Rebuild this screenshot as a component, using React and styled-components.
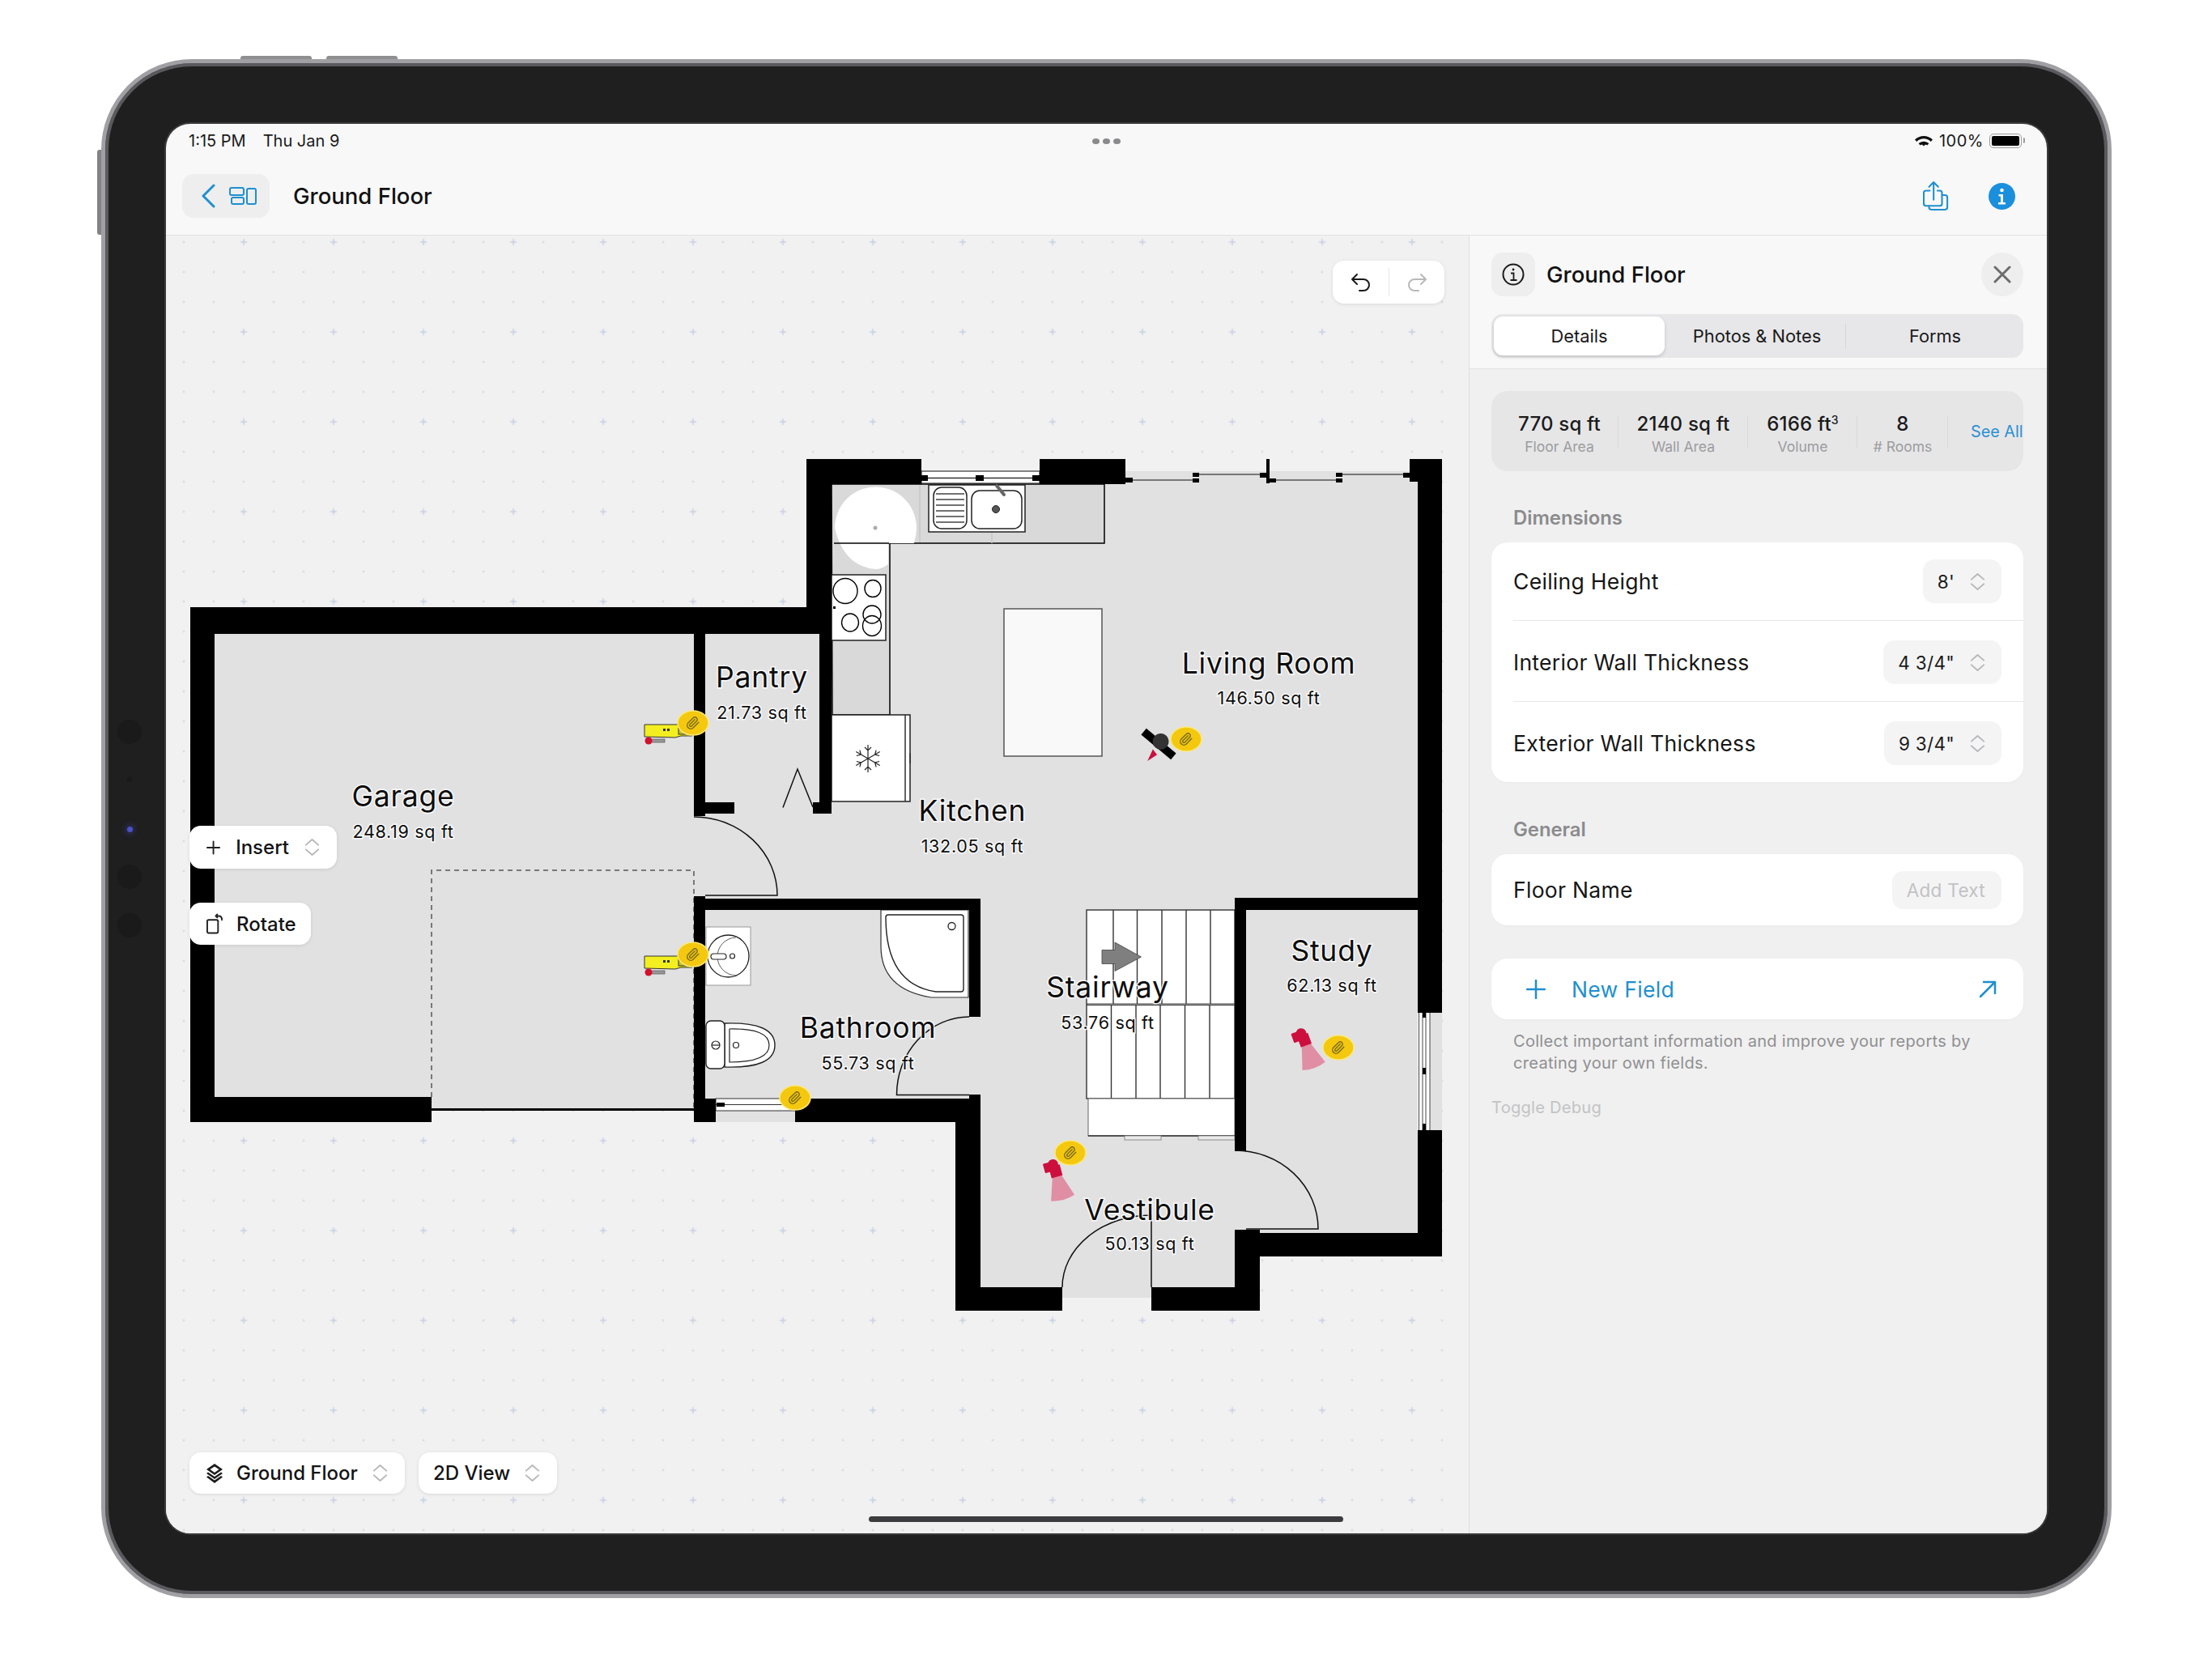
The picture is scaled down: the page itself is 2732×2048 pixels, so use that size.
import React from "react";
import styled, { createGlobalStyle } from "styled-components";

const GlobalStyle = createGlobalStyle`
  html, body { margin: 0; padding: 0; background: #fff; }
  * { box-sizing: border-box; }
  body { font-family: Inter, "Liberation Sans", sans-serif; color: #111; }
`;

const Page = styled.div`
  width: 2732px;
  height: 2048px;
  padding: 73px 0 0 125px;
  overflow: hidden;
`;

const Device = styled.div`
  position: relative;
  width: 2483px;
  height: 1901px;
  padding: 75px;
  border: 5px solid #a0a0a4;
  border-radius: 112px;
  background: #1f1f20;
  box-shadow: inset 0 0 0 4px #5a5a5e;
`;

const TopButton = styled.div`
  position: absolute;
  top: -9px;
  left: ${(p) => p.$left}px;
  width: 88px;
  height: 4px;
  border-radius: 3px 3px 0 0;
  background: #8f8f92;
`;

const SideButton = styled.div`
  position: absolute;
  top: 107px;
  left: -10px;
  width: 5px;
  height: 105px;
  border-radius: 3px 0 0 3px;
  background: #838386;
`;

const Sensor = styled.div`
  position: absolute;
  left: ${(p) => p.$left}px;
  top: ${(p) => p.$top}px;
  width: ${(p) => p.$size}px;
  height: ${(p) => p.$size}px;
  border-radius: 50%;
  background: ${(p) => p.$color};
  box-shadow: ${(p) => (p.$glow ? "0 0 6px 3px rgba(70, 70, 170, 0.35)" : "none")};
`;

const Screen = styled.div`
  position: relative;
  display: flex;
  flex-direction: column;
  width: 2323px;
  height: 1741px;
  border-radius: 30px;
  overflow: hidden;
  background: #f8f8f8;
  box-shadow: 0 0 0 2px #3a3a3c;
`;

const StatusBar = styled.div`
  position: relative;
  display: flex;
  align-items: center;
  justify-content: space-between;
  height: 42px;
  padding: 0 31px 0 28px;
  font-size: 20px;
  color: #1a1a1a;
`;

const StatusGroup = styled.div`
  display: flex;
  align-items: center;
  gap: ${(p) => p.$gap}px;
`;

const BatteryText = styled.span`
  letter-spacing: 0.5px;
`;

const TopDots = styled.div`
  position: absolute;
  left: 1144px;
  top: 18px;
  display: flex;
  gap: 4px;
  span {
    width: 9px;
    height: 7px;
    border-radius: 50%;
    background: #8a8a8c;
  }
`;

const Battery = styled.div`
  position: relative;
  width: 40px;
  height: 18px;
  padding: 2px;
  border: 1.5px solid #9a9a9c;
  border-radius: 5px;
  &::before {
    content: "";
    display: block;
    width: 100%;
    height: 100%;
    border-radius: 2px;
    background: #000;
  }
  &::after {
    content: "";
    position: absolute;
    right: -5px;
    top: 4px;
    width: 2px;
    height: 7px;
    border-radius: 0 2px 2px 0;
    background: #9a9a9c;
  }
`;

const NavBar = styled.div`
  display: flex;
  align-items: center;
  height: 96px;
  padding: 0 39px 1px 20px;
  border-bottom: 1px solid #e2e2e4;
`;

const BackButton = styled.div`
  display: flex;
  align-items: center;
  gap: 16px;
  width: 108px;
  height: 54px;
  padding-left: 24px;
  border-radius: 14px;
  background: #eeeeef;
`;

const NavTitle = styled.div`
  margin-left: 29px;
  font-size: 27.5px;
  font-weight: 500;
`;

const NavIcons = styled.div`
  display: flex;
  align-items: center;
  gap: 49px;
  margin-left: auto;
`;

const Main = styled.div`
  display: flex;
  flex: 1;
  min-height: 0;
`;

const Canvas = styled.div`
  position: relative;
  flex: 1;
  background: #f1f1f2;
`;

const PlanSvg = styled.svg`
  position: absolute;
  inset: 0;
  width: 100%;
  height: 100%;
`;

const RoomName = styled.text`
  font-family: Inter, sans-serif;
  font-size: 35.5px;
  letter-spacing: 0.8px;
  text-anchor: middle;
  fill: #0d0d0d;
  stroke: #fff;
  stroke-width: 3px;
  stroke-opacity: 0.85;
  paint-order: stroke;
`;

const RoomArea = styled(RoomName)`
  font-size: 21.5px;
  letter-spacing: 0.7px;
`;

const FloatButton = styled.div`
  position: absolute;
  left: ${(p) => p.$left}px;
  top: ${(p) => p.$top}px;
  display: flex;
  align-items: center;
  gap: ${(p) => p.$gap}px;
  width: ${(p) => p.$width}px;
  height: ${(p) => p.$height}px;
  padding-left: ${(p) => p.$pad}px;
  border-radius: 14px;
  background: #fff;
  box-shadow: 0 1px 4px rgba(0, 0, 0, 0.1);
  font-size: 24px;
  font-weight: 500;
  white-space: nowrap;
  color: #141414;
`;

const PushRight = styled.span`
  display: flex;
  margin-left: auto;
  margin-right: 21px;
`;

const UndoBox = styled.div`
  position: absolute;
  left: 1441px;
  top: 31px;
  display: grid;
  grid-template-columns: 1fr 1fr;
  width: 138px;
  height: 53px;
  border-radius: 14px;
  background: #fff;
  box-shadow: 0 1px 4px rgba(0, 0, 0, 0.1);
`;

const UndoCell = styled.div`
  display: flex;
  align-items: center;
  justify-content: center;
  position: relative;
  & + &::before {
    content: "";
    position: absolute;
    left: 0;
    top: 9px;
    bottom: 9px;
    width: 1px;
    background: #e6e6e8;
  }
`;

const HomeBar = styled.div`
  position: absolute;
  left: 868px;
  bottom: 14px;
  width: 586px;
  height: 7px;
  border-radius: 4px;
  background: #3c3c3e;
`;

const Panel = styled.div`
  display: flex;
  flex-direction: column;
  width: 714px;
  border-left: 1px solid #dedee0;
  background: #f0f0f0;
`;

const PanelHead = styled.div`
  display: flex;
  flex-direction: column;
  gap: 22px;
  padding: 21px 29px 13px 27px;
  border-bottom: 1px solid #e2e2e4;
  background: #f8f8f8;
`;

const HeadRow = styled.div`
  display: flex;
  align-items: center;
  height: 54px;
`;

const HeadIcon = styled.div`
  display: flex;
  align-items: center;
  justify-content: center;
  width: 54px;
  height: 54px;
  border-radius: 14px;
  background: #eeeeef;
`;

const HeadTitle = styled.div`
  margin-left: 14px;
  font-size: 27.5px;
  font-weight: 500;
`;

const CloseButton = styled.div`
  display: flex;
  align-items: center;
  justify-content: center;
  width: 52px;
  height: 54px;
  margin-left: auto;
  border-radius: 50%;
  background: #eeeeef;
`;

const Tabs = styled.div`
  position: relative;
  display: grid;
  grid-template-columns: 215px 220px 220px;
  align-items: center;
  height: 54px;
  padding: 3px;
  border-radius: 14px;
  background: #e7e7e9;
`;

const Tab = styled.div`
  position: relative;
  display: flex;
  align-items: center;
  justify-content: center;
  height: 48px;
  width: ${(p) => (p.$active ? "211px" : "auto")};
  border-radius: 11px;
  font-size: 21.8px;
  color: #1a1a1a;
  background: ${(p) => (p.$active ? "#fff" : "transparent")};
  box-shadow: ${(p) => (p.$active ? "0 2px 4px rgba(0,0,0,.16)" : "none")};
  &::after {
    content: "";
    display: ${(p) => (p.$divider ? "block" : "none")};
    position: absolute;
    right: 0;
    top: 9px;
    bottom: 8px;
    width: 1px;
    background: #d5d5d8;
  }
`;

const PanelBody = styled.div`
  flex: 1;
  padding: 27px 29px 0 27px;
`;

const StatBox = styled.div`
  display: grid;
  grid-template-columns: 146px 160px 135px 112px 1fr;
  align-items: center;
  height: 99px;
  padding-left: 11px;
  border-radius: 20px;
  overflow: hidden;
  background: #e6e6e7;
`;

const Stat = styled.div`
  position: relative;
  display: flex;
  flex-direction: column;
  align-items: center;
  padding-top: 8px;
  &::after {
    content: "";
    position: absolute;
    right: 0;
    top: 12px;
    height: 41px;
    width: 1px;
    background: #dadadc;
  }
`;

const StatValue = styled.div`
  font-size: 24px;
  font-weight: 500;
  line-height: 30px;
  letter-spacing: 0.2px;
  white-space: nowrap;
  color: #1b1b1b;
  sup {
    font-size: 14px;
    line-height: 0;
    vertical-align: 8px;
  }
`;

const StatLabel = styled.div`
  margin-top: 1px;
  font-size: 17.5px;
  line-height: 24px;
  color: #9c9c9e;
`;

const SeeAll = styled.div`
  padding-left: 28px;
  white-space: nowrap;
  font-size: 19.8px;
  color: #2a90d2;
`;

const SectionLabel = styled.div`
  height: 30px;
  margin: ${(p) => p.$top}px 0 15px;
  padding-left: 27px;
  font-size: 23.8px;
  font-weight: 600;
  line-height: 30px;
  color: #8b8b8d;
`;

const Card = styled.div`
  border-radius: 20px;
  background: #fff;
  box-shadow: 0 1px 3px rgba(0, 0, 0, 0.03);
`;

const Row = styled.div`
  display: flex;
  align-items: center;
  justify-content: space-between;
  height: ${(p) => p.$height}px;
  margin-left: 27px;
  padding-right: 27px;
  font-size: 26.5px;
  letter-spacing: 0.3px;
  color: #161616;
  & + & {
    padding-top: 3px;
    border-top: 1px solid #e8e8ea;
  }
`;

const Pill = styled.div`
  display: flex;
  align-items: center;
  height: ${(p) => p.$height || 54}px;
  padding: 0 20px 0 18px;
  border-radius: 14px;
  font-size: 22.5px;
  letter-spacing: 0.3px;
  background: #f4f4f5;
  color: ${(p) => p.$color || "#1a1a1a"};
  svg {
    margin-left: 19px;
  }
`;

const NewFieldCard = styled(Card)`
  display: flex;
  align-items: center;
  height: 75px;
  margin-top: 41px;
  padding: 0 33px 0 43px;
  font-size: 26.5px;
  letter-spacing: 0.3px;
  color: #1f8fce;
`;

const NewFieldText = styled.span`
  margin-left: 32px;
  margin-right: auto;
`;

const Note = styled.div`
  margin-top: 14px;
  padding-left: 27px;
  font-size: 20px;
  line-height: 27px;
  letter-spacing: 0.3px;
  color: #8f8f91;
`;

const ToggleDebug = styled.div`
  margin-top: 27px;
  font-size: 20.2px;
  line-height: 27px;
  letter-spacing: 0.2px;
  color: #c3c3c5;
`;

const Updown = () => (
  <svg width="19" height="21" viewBox="1 1 18 22" fill="none" stroke="#b8b8bb" strokeWidth="2" strokeLinecap="round" strokeLinejoin="round">
    <path d="M2 9 10 2l8 7M2 15l8 7 8-7" />
  </svg>
);

const Clip = ({ x, y }) => (
  <g transform={`translate(${x} ${y})`}>
    <ellipse rx="19" ry="15" fill="#f3c80f" stroke="#fbe97a" strokeWidth="1.5" />
    <path
      d="m21.44 11.05-9.19 9.19a6 6 0 0 1-8.49-8.49l8.57-8.57A4 4 0 1 1 18 8.84l-8.59 8.57a2 2 0 0 1-2.83-2.83l8.49-8.48"
      fill="none"
      stroke="#7a6a1a"
      strokeWidth="2"
      strokeLinecap="round"
      strokeLinejoin="round"
      transform="scale(0.72) translate(-12 -12)"
    />
  </g>
);

const Torch = ({ y }) => (
  <g transform={`translate(0 ${y})`}>
    <path d="M796 895h44l6-3h9v17h-14l-7 2-38-1z" fill="#f2ee20" stroke="#333" strokeWidth="1" />
    <rect x="819" y="900" width="3" height="3" fill="#333" />
    <rect x="824" y="900" width="3" height="3" fill="#333" />
    <rect x="838" y="899" width="10" height="8" fill="#c9c326" stroke="#333" strokeWidth="1" />
    <rect x="803" y="913" width="18" height="4" fill="#999" stroke="#555" strokeWidth="0.7" />
    <circle cx="801" cy="915" r="4.5" fill="#d3102d" />
  </g>
);

const Camera = ({ x, y, angle }) => (
  <g transform={`translate(${x} ${y}) rotate(${angle})`}>
    <path d="M-6 10h12l9 27q-15 5-30 0z" fill="#e08ea3" />
    <rect x="-7" y="-4" width="14" height="14" fill="#cc0f3c" />
    <circle cx="-1" cy="-6" r="6.500" fill="#cc0f3c" />
    <rect x="-13" y="-10" width="7" height="12" rx="1" fill="#cc0f3c" />
  </g>
);

const walls = [
  [235, 750, 30, 636],
  [235, 750, 777, 33],
  [871, 750, 156, 29],
  [235, 1355, 298, 31],
  [857, 783, 14, 225],
  [871, 991, 36, 14],
  [1012, 779, 15, 226],
  [1004, 991, 23, 14],
  [996, 567, 31, 183],
  [996, 567, 142, 31],
  [1284, 567, 106, 31],
  [1741, 567, 40, 28],
  [1751, 567, 30, 684],
  [1751, 1396, 30, 156],
  [1525, 1523, 256, 29],
  [1525, 1109, 14, 313],
  [1525, 1109, 240, 15],
  [1525, 1519, 31, 100],
  [1422, 1590, 134, 29],
  [1180, 1590, 132, 29],
  [1180, 1386, 31, 233],
  [982, 1357, 229, 29],
  [1197, 1110, 14, 146],
  [1197, 1352, 14, 10],
  [857, 1110, 354, 14],
  [857, 1107, 14, 279],
  [857, 1357, 27, 29],
];

const rooms = [
  ["Living Room", "146.50 sq ft", 1567, 832, 870],
  ["Kitchen", "132.05 sq ft", 1201, 1014, 1053],
  ["Garage", "248.19 sq ft", 498, 996, 1035],
  ["Pantry", "21.73 sq ft", 941, 849, 888],
  ["Bathroom", "55.73 sq ft", 1072, 1282, 1321],
  ["Stairway", "53.76 sq ft", 1368, 1232, 1271],
  ["Study", "62.13 sq ft", 1645, 1187, 1225],
  ["Vestibule", "50.13 sq ft", 1420, 1507, 1544],
];

const stepsTop = [1375, 1404.5, 1435, 1465, 1495];
const stepsLow = [1372.5, 1403, 1433, 1463.5, 1494];

const FloorPlan = () => (
  <PlanSvg viewBox="205 291 1609 1603" preserveAspectRatio="none">
    <defs>
      <pattern id="grid" x="282.5" y="280.5" width="111" height="111" patternUnits="userSpaceOnUse">
        {[18.5, 55.5, 92.5].map((py) =>
          [18.5, 55.5, 92.5].map((px) =>
            px === 18.5 && py === 18.5 ? null : (
              <rect key={`${px}-${py}`} x={px - 1} y={py - 1} width="2" height="2" fill="#cdd0da" />
            )
          )
        )}
        <path d="M18.5 14.500v8M14.500 18.5h8" stroke="#c5cce0" strokeWidth="1.4" />
      </pattern>
    </defs>
    <rect x="205" y="291" width="1609" height="1603" fill="url(#grid)" />

    {/* floor */}
    <path
      d="M235 750H996V567H1390V582H1741V567H1781V1552H1556V1619H1422V1603H1312V1619H1180V1386H857V1370H533V1386H235Z"
      fill="#e1e1e2"
    />
    <rect x="1138" y="567" width="146" height="15" fill="#f1f1f2" />

    {/* kitchen counter */}
    <path d="M1027 598H1364V671H1099V883H1028Z" fill="#d9d9da" stroke="#000" strokeWidth="1.5" />
    <path d="M1136 600v70M1225 657v14" stroke="#c8c8c9" strokeWidth="1.5" />
    <path d="M1031 652a50 50 0 0 1 101 0q0 9-3 19h-32v26q-8 6-16 6-34-3-47-40z" fill="#fff" />
    <circle cx="1081" cy="652" r="2.5" fill="#aaa" />
    <path d="M1030 671H1098" stroke="#000" strokeWidth="1.5" />

    <rect x="1147" y="599" width="119" height="58" fill="#fff" stroke="#222" strokeWidth="1.5" />
    <rect x="1153" y="602" width="41" height="51" rx="10" fill="#fff" stroke="#222" strokeWidth="1.5" />
    <path d="M1156 610h35M1156 617h35M1156 624h35M1156 631h35M1156 638h35M1156 645h35" stroke="#444" strokeWidth="1.5" />
    <rect x="1200" y="606" width="62" height="47" rx="10" fill="#fff" stroke="#222" strokeWidth="1.5" />
    <circle cx="1230" cy="629" r="4.5" fill="#555" stroke="#222" />
    <path d="M1231 600l9 11" stroke="#666" strokeWidth="4" strokeLinecap="round" />

    <rect x="1027" y="710" width="67" height="81" fill="#fff" stroke="#222" strokeWidth="1.5" />
    <ellipse cx="1044" cy="730" rx="15" ry="15.5" fill="none" stroke="#000" strokeWidth="1.4" />
    <ellipse cx="1078" cy="727" rx="10" ry="10.5" fill="none" stroke="#000" strokeWidth="1.4" />
    <ellipse cx="1050" cy="769" rx="10.5" ry="11" fill="none" stroke="#000" strokeWidth="1.4" />
    <ellipse cx="1077" cy="759" rx="11" ry="11" fill="none" stroke="#000" strokeWidth="1.4" />
    <ellipse cx="1077" cy="773" rx="11.5" ry="12.5" fill="none" stroke="#000" strokeWidth="1.4" />
    <rect x="1029" y="749" width="3" height="3" fill="#000" />

    <rect x="1027" y="883" width="97" height="107" fill="#fff" stroke="#222" strokeWidth="1.5" />
    <path d="M1118 883v107M1124 930v13" stroke="#333" strokeWidth="1.5" />
    <g stroke="#222" strokeWidth="1.2" fill="none" transform="translate(1072 937)">
      {[0, 60, 120, 180, 240, 300].map((a) => (
        <path key={a} d="M0 0V-17M-4-14 0-10l4-4" transform={`rotate(${a})`} />
      ))}
    </g>

    {/* island */}
    <rect x="1240" y="752" width="121" height="182" fill="#f9f9f9" stroke="#555" strokeWidth="1.5" />

    {/* bathroom */}
    <path d="M1088 1124H1196V1232H1150Q1088 1222 1088 1169Z" fill="#fff" stroke="#333" strokeWidth="1.2" />
    <path d="M1097 1130H1187a3 3 0 0 1 3 3V1222a3 3 0 0 1-3 3H1156Q1094 1216 1094 1133a3 3 0 0 1 3-3Z" fill="#fff" stroke="#222" strokeWidth="1.4" />
    <circle cx="1175.5" cy="1144" r="4.5" fill="#fff" stroke="#222" strokeWidth="1.3" />
    <rect x="872" y="1145" width="55" height="72" fill="#fff" stroke="#999" strokeWidth="1" />
    <ellipse cx="899.5" cy="1181" rx="25.5" ry="26" fill="#fff" stroke="#222" strokeWidth="1.3" />
    <path d="M889 1157a23 23 0 0 1 1 47" fill="none" stroke="#333" strokeWidth="0.8" transform="rotate(180 899.5 1181)" />
    <rect x="878" y="1178" width="19" height="7" rx="3.5" fill="#fff" stroke="#222" strokeWidth="1.2" />
    <circle cx="904.5" cy="1181" r="3" fill="#fff" stroke="#222" strokeWidth="1.2" />
    <path d="M895 1264Q957 1262 957 1291T895 1318Z" fill="#fff" stroke="#222" strokeWidth="1.4" />
    <path d="M901 1271Q950 1270 950 1291T901 1312Z" fill="#fff" stroke="#222" strokeWidth="1.2" />
    <circle cx="909" cy="1291" r="3.5" fill="#fff" stroke="#222" strokeWidth="1.2" />
    <rect x="872" y="1261" width="23" height="59" rx="6" fill="#fff" stroke="#222" strokeWidth="1.4" />
    <circle cx="884" cy="1291" r="5" fill="#fff" stroke="#222" strokeWidth="1.2" />
    <path d="M879 1291h10" stroke="#222" strokeWidth="1.2" />

    {/* stairs */}
    <rect x="1342" y="1124" width="183" height="233" fill="#fff" stroke="#333" strokeWidth="1.4" />
    <path d="M1342 1240h183M1342 1241.5h183" stroke="#333" strokeWidth="1" />
    {stepsTop.map((x) => (
      <path key={x} d={`M${x} 1124v116`} stroke="#333" strokeWidth="1.4" />
    ))}
    {stepsLow.map((x) => (
      <path key={x} d={`M${x} 1242v115`} stroke="#333" strokeWidth="1.4" />
    ))}
    <rect x="1344" y="1357" width="181" height="46" fill="#fff" stroke="#666" strokeWidth="1" />
    <path d="M1344 1403h181" stroke="#333" strokeWidth="1.5" />
    <rect x="1389" y="1403" width="45" height="5" fill="#e9e9ea" stroke="#777" strokeWidth="0.8" />
    <rect x="1480" y="1403" width="45" height="5" fill="#e9e9ea" stroke="#777" strokeWidth="0.8" />
    <path d="M1361 1173.5h16V1164l32.500 18-32.500 17.500v-9h-16z" fill="#7f7f7f" stroke="#444" strokeWidth="0.8" />

    {/* windows */}
    <rect x="1138" y="582" width="146" height="15" fill="#fff" stroke="#333" strokeWidth="1.2" />
    <path d="M1138 590.500h146" stroke="#333" strokeWidth="1.5" />
    <path d="M1138 587h8v7h-8zM1205 587h10v7h-10zM1275 587h9v7h-9z" fill="#000" />
    <path d="M1390 593H1475M1481 586H1556M1576 593H1650M1658 586H1733" stroke="#555" strokeWidth="1.4" />
    <path d="M1390 590h9v6h-9zM1473 584h8v5h-8zM1473 591h8v5h-8zM1556 584h8v6h-8zM1564 567h4v30h-4zM1568 591h8v5h-8zM1650 584h8v5h-8zM1650 591h8v5h-8zM1733 584h8v6h-8z" fill="#000" />
    <rect x="1751" y="1251" width="15" height="145" fill="#fff" />
    <path d="M1752.500 1251v145M1757 1251v145M1761 1251v145M1766 1251v145" stroke="#444" strokeWidth="1" />
    <path d="M1757 1319h4v8h-4zM1757 1388h4v8h-4zM1757 1251h4v6h-4z" fill="#000" />
    <rect x="884" y="1357" width="98" height="15" fill="#fff" stroke="#333" strokeWidth="1" />
    <path d="M884 1364.500h98" stroke="#333" strokeWidth="1.2" />
    <path d="M885 1362h10v5h-10z" fill="#000" />

    {/* garage door */}
    <path d="M533 1370.500H857" stroke="#000" strokeWidth="3" />
    <path d="M533 1355V1075H857V1370" fill="none" stroke="#555" strokeWidth="1.5" strokeDasharray="6 5" />

    {walls.map(([x, y, w, h]) => (
      <rect key={`${x}-${y}-${w}`} x={x} y={y} width={w} height={h} fill="#000" />
    ))}

    {/* doors */}
    <g fill="none" stroke="#111" strokeWidth="1.5">
      <path d="M857 1009A103 97 0 0 1 960 1106H871" />
      <path d="M967 997.500 985 950l19 47" />
      <path d="M1197 1256A90 96 0 0 0 1107.500 1352.500H1197" />
      <path d="M1312 1590A110 89 0 0 1 1422 1501V1590" />
      <path d="M1525 1421A103 97 0 0 1 1628 1518H1539" />
    </g>

    {/* capture markers */}
    <Torch y={0} />
    <Torch y={286} />
    <Camera x={1303} y={1444} angle={-15} />
    <Camera x={1610} y={1282} angle={-20} />
    <g transform="translate(1431 919) rotate(40)">
      <rect x="-24" y="-5" width="48" height="10" fill="#000" />
      <circle cy="-4" r="10" fill="#333" />
    </g>
    <path d="M1424 927l-5 11 9-6z" fill="#cc0f3c" stroke="#cc0f3c" strokeWidth="1.5" />
    <Clip x={856} y={893} />
    <Clip x={856} y={1179} />
    <Clip x={982} y={1356} />
    <Clip x={1465} y={913} />
    <Clip x={1322} y={1424} />
    <Clip x={1653} y={1294} />

    {rooms.map(([name, area, x, y1, y2]) => (
      <g key={name}>
        <RoomName x={x} y={y1}>{name}</RoomName>
        <RoomArea x={x} y={y2}>{area}</RoomArea>
      </g>
    ))}
  </PlanSvg>
);

export default function App() {
  return (
    <Page>
      <GlobalStyle />
      <Device>
        <TopButton $left={167} />
        <TopButton $left={273} />
        <SideButton />
        <Sensor $left={15} $top={811} $size={30} $color="#1a1a1b" />
        <Sensor $left={27} $top={882} $size={6} $color="#19191a" />
        <Sensor $left={27} $top={943} $size={7} $color="#4a50c8" $glow />
        <Sensor $left={15} $top={990} $size={30} $color="#1a1a1b" />
        <Sensor $left={15} $top={1050} $size={30} $color="#1a1a1b" />
        <Screen>
          <StatusBar>
            <StatusGroup $gap={21}>
              <span>1:15 PM</span>
              <span>Thu Jan 9</span>
            </StatusGroup>
            <TopDots>
              <span />
              <span />
              <span />
            </TopDots>
            <StatusGroup $gap={7}>
              <svg width="24" height="18" viewBox="0 0 24 18" fill="#111">
                <path d="M12 14.500l3 -3.100q-3-2.400-6 0zM12 2C7.800 2 4 3.600 1 6.500l2.300 2.400C5.600 6.600 8.700 5.300 12 5.300s6.400 1.300 8.700 3.600L23 6.500C20 3.600 16.200 2 12 2zM5.600 11.200l2.200 2.200c2.300-2.200 6.100-2.200 8.400 0l2.200-2.200c-3.500-3.400-9.300-3.400-12.800 0z" transform="translate(0 1)" />
              </svg>
              <BatteryText>100%</BatteryText>
              <Battery />
            </StatusGroup>
          </StatusBar>
          <NavBar>
            <BackButton>
              <svg width="18" height="30" viewBox="0 0 18 30" fill="none" stroke="#1f8fce" strokeWidth="3" strokeLinecap="round" strokeLinejoin="round">
                <path d="M15 2 2 15l13 13" />
              </svg>
              <svg width="34" height="22" viewBox="0 0 34 22" fill="none" stroke="#1f8fce" strokeWidth="2">
                <rect x="1" y="1" width="17" height="9" rx="2" />
                <rect x="3" y="13" width="15" height="8" rx="2" />
                <rect x="22" y="2" width="11" height="19" rx="2" />
              </svg>
            </BackButton>
            <NavTitle>Ground Floor</NavTitle>
            <NavIcons>
              <svg width="32" height="40" viewBox="0 0 34 40" fill="none" stroke="#1f8fce" strokeWidth="2.200" strokeLinecap="round" strokeLinejoin="round">
                <path d="M14 25V2M8 8l6-6 6 6" />
                <path d="M9 13H4a3 3 0 0 0-3 3v14a3 3 0 0 0 3 3h18a3 3 0 0 0 3-3V16a3 3 0 0 0-3-3h-3" />
                <path d="M25 19h4a3 3 0 0 1 3 3v13a3 3 0 0 1-3 3H11a3 3 0 0 1-3-3v-2" />
              </svg>
              <svg width="33" height="33" viewBox="0 0 33 33">
                <circle cx="16.500" cy="16.500" r="16.500" fill="#1a8fdd" />
                <circle cx="16.500" cy="9" r="2.300" fill="#fff" />
                <path d="M12.500 14h5.500v10h3v2.500h-9V24h3v-7.500h-2.500z" fill="#fff" />
              </svg>
            </NavIcons>
          </NavBar>
          <Main>
            <Canvas>
              <FloorPlan />
              <UndoBox>
                <UndoCell>
                  <svg width="28" height="26" viewBox="0 0 28 26" fill="none" stroke="#1a1a1a" strokeWidth="2" strokeLinecap="round" strokeLinejoin="round">
                    <path d="M9 3 3 9l6 6M3 9h14a7 7 0 0 1 0 14h-5" />
                  </svg>
                </UndoCell>
                <UndoCell>
                  <svg width="28" height="26" viewBox="0 0 28 26" fill="none" stroke="#b9b9bb" strokeWidth="2" strokeLinecap="round" strokeLinejoin="round">
                    <path d="m19 3 6 6-6 6M25 9H11a7 7 0 0 0 0 14h5" />
                  </svg>
                </UndoCell>
              </UndoBox>
              <FloatButton $left={29} $top={729} $width={182} $height={53} $pad={21} $gap={19}>
                <svg width="18" height="18" viewBox="0 0 18 18" stroke="#222" strokeWidth="2" strokeLinecap="round">
                  <path d="M9 1v16M1 9h16" />
                </svg>
                <span>Insert</span>
                <PushRight>
                  <Updown />
                </PushRight>
              </FloatButton>
              <FloatButton $left={29} $top={824} $width={150} $height={52} $pad={21} $gap={16}>
                <svg width="21" height="26" viewBox="0 0 22 26" fill="none" stroke="#222" strokeWidth="2" strokeLinecap="round" strokeLinejoin="round">
                  <rect x="1" y="8" width="14" height="17" rx="2" />
                  <path d="M12 3h4q4 0 4 5M14 1l-2 2 2 2" />
                </svg>
                <span>Rotate</span>
              </FloatButton>
              <FloatButton $left={29} $top={1503} $width={266} $height={51} $pad={20} $gap={16}>
                <svg width="22" height="24" viewBox="0 0 22 24" fill="#1b1b1b" stroke="none">
                  <path d="M11 0 21 7l-10 7L1 7zM11 3.500 5.500 7l5.500 4 5.500-4z" fillRule="evenodd" />
                  <path d="M3 10.500 11 16l8-5.500 2 1.500-10 7-10-7z" />
                  <path d="M3 15 11 20.500l8-5.500 2 1.500-10 7.500-10-7.500z" />
                </svg>
                <span>Ground Floor</span>
                <PushRight>
                  <Updown />
                </PushRight>
              </FloatButton>
              <FloatButton $left={312} $top={1503} $width={171} $height={51} $pad={18} $gap={16}>
                <span>2D View</span>
                <PushRight>
                  <Updown />
                </PushRight>
              </FloatButton>
            </Canvas>
            <Panel>
              <PanelHead>
                <HeadRow>
                  <HeadIcon>
                    <svg width="28" height="28" viewBox="0 0 28 28" fill="none" stroke="#1a1a1a" strokeWidth="2">
                      <circle cx="14" cy="14" r="12.500" />
                      <path d="M11 12.500h3.500V21M10.500 21h8" strokeWidth="1.8" />
                      <circle cx="14" cy="8" r="1.400" fill="#1a1a1a" stroke="none" />
                    </svg>
                  </HeadIcon>
                  <HeadTitle>Ground Floor</HeadTitle>
                  <CloseButton>
                    <svg width="22" height="22" viewBox="0 0 22 22" stroke="#6c6c6e" strokeWidth="3" strokeLinecap="round">
                      <path d="m2 2 18 18M20 2 2 20" />
                    </svg>
                  </CloseButton>
                </HeadRow>
                <Tabs>
                  <Tab $active>Details</Tab>
                  <Tab $divider>Photos &amp; Notes</Tab>
                  <Tab>Forms</Tab>
                </Tabs>
              </PanelHead>
              <PanelBody>
                <StatBox>
                  <Stat>
                    <StatValue>770 sq ft</StatValue>
                    <StatLabel>Floor Area</StatLabel>
                  </Stat>
                  <Stat>
                    <StatValue>2140 sq ft</StatValue>
                    <StatLabel>Wall Area</StatLabel>
                  </Stat>
                  <Stat>
                    <StatValue>
                      6166 ft<sup>3</sup>
                    </StatValue>
                    <StatLabel>Volume</StatLabel>
                  </Stat>
                  <Stat>
                    <StatValue>8</StatValue>
                    <StatLabel># Rooms</StatLabel>
                  </Stat>
                  <SeeAll>See All</SeeAll>
                </StatBox>
                <SectionLabel $top={43}>Dimensions</SectionLabel>
                <Card>
                  <Row $height={96}>
                    <span>Ceiling Height</span>
                    <Pill>
                      8'
                      <Updown />
                    </Pill>
                  </Row>
                  <Row $height={100}>
                    <span>Interior Wall Thickness</span>
                    <Pill>
                      4 3/4"
                      <Updown />
                    </Pill>
                  </Row>
                  <Row $height={100}>
                    <span>Exterior Wall Thickness</span>
                    <Pill>
                      9 3/4"
                      <Updown />
                    </Pill>
                  </Row>
                </Card>
                <SectionLabel $top={44}>General</SectionLabel>
                <Card>
                  <Row $height={88}>
                    <span>Floor Name</span>
                    <Pill $height={47} $color="#c2c2c4">
                      Add Text
                    </Pill>
                  </Row>
                </Card>
                <NewFieldCard>
                  <svg width="24" height="24" viewBox="0 0 24 24" stroke="#1f8fce" strokeWidth="2.500" strokeLinecap="round">
                    <path d="M12 1v22M1 12h22" />
                  </svg>
                  <NewFieldText>New Field</NewFieldText>
                  <svg width="22" height="22" viewBox="0 0 22 22" fill="none" stroke="#1f8fce" strokeWidth="2.500" strokeLinecap="round" strokeLinejoin="round">
                    <path d="M2 20 20 2M6 2h14v14" />
                  </svg>
                </NewFieldCard>
                <Note>
                  Collect important information and improve your reports by
                  <br />
                  creating your own fields.
                </Note>
                <ToggleDebug>Toggle Debug</ToggleDebug>
              </PanelBody>
            </Panel>
          </Main>
          <HomeBar />
        </Screen>
      </Device>
    </Page>
  );
}
